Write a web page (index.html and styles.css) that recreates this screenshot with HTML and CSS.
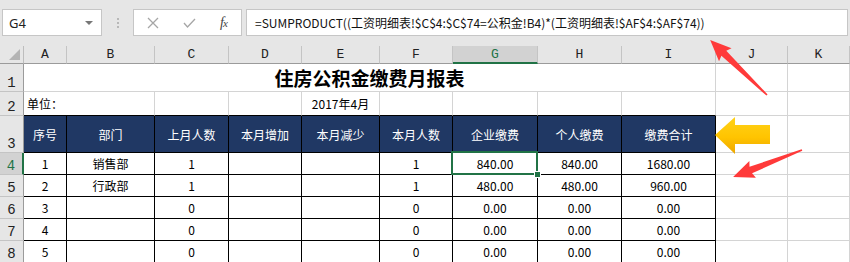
FILE: index.html
```html
<!DOCTYPE html>
<html lang="zh-CN">
<head>
  <meta charset="UTF-8">
  <title>住房公积金缴费月报表</title>
  <link rel="stylesheet" href="styles.css">
</head>
<body>

<!-- formula bar -->
<div class="bar">
  <div class="namebox">
    <span>G4</span>
    <span class="caret"></span>
  </div>
  <div class="grip"><i></i><i></i><i></i></div>
  <div class="fnbox">
    <svg class="cancel" width="12" height="12" viewBox="0 0 12 12"><path d="M1 1 L11 11 M11 1 L1 11" /></svg>
    <svg class="enter" width="13" height="10" viewBox="0 0 13 10"><path d="M1 5 L4.5 9 L12 1" /></svg>
    <span class="fx">f<small>x</small></span>
  </div>
  <div class="formula">=SUMPRODUCT((工资明细表!$C$4:$C$74=公积金!B4)*(工资明细表!$AF$4:$AF$74))</div>
</div>

<!-- sheet -->
<div class="sheet">
  <div class="corner"><span></span></div>
  <div class="colhead">A</div>
  <div class="colhead">B</div>
  <div class="colhead">C</div>
  <div class="colhead">D</div>
  <div class="colhead">E</div>
  <div class="colhead">F</div>
  <div class="colhead active">G</div>
  <div class="colhead">H</div>
  <div class="colhead">I</div>
  <div class="colhead">J</div>
  <div class="colhead">K</div>

  <!-- row 1 -->
  <div class="rowhead">1</div>
  <div class="cell title">住房公积金缴费月报表</div>
  <div class="cell"></div>
  <div class="cell"></div>

  <!-- row 2 -->
  <div class="rowhead">2</div>
  <div class="cell top unit">单位：</div>
  <div class="cell top"></div>
  <div class="cell top"></div>
  <div class="cell top">2017年4月</div>
  <div class="cell top"></div>
  <div class="cell top"></div>
  <div class="cell top"></div>
  <div class="cell top"></div>
  <div class="cell"></div>
  <div class="cell"></div>

  <!-- row 3 -->
  <div class="rowhead">3</div>
  <div class="cell th">序号</div>
  <div class="cell th">部门</div>
  <div class="cell th">上月人数</div>
  <div class="cell th">本月增加</div>
  <div class="cell th">本月减少</div>
  <div class="cell th">本月人数</div>
  <div class="cell th">企业缴费</div>
  <div class="cell th">个人缴费</div>
  <div class="cell th">缴费合计</div>
  <div class="cell"></div>
  <div class="cell"></div>

  <!-- row 4 -->
  <div class="rowhead active">4</div>
  <div class="cell td">1</div>
  <div class="cell td">销售部</div>
  <div class="cell td">1</div>
  <div class="cell td"></div>
  <div class="cell td"></div>
  <div class="cell td">1</div>
  <div class="cell td selected">840.00<span class="handle"></span></div>
  <div class="cell td">840.00</div>
  <div class="cell td">1680.00</div>
  <div class="cell"></div>
  <div class="cell"></div>

  <!-- row 5 -->
  <div class="rowhead">5</div>
  <div class="cell td">2</div>
  <div class="cell td">行政部</div>
  <div class="cell td">1</div>
  <div class="cell td"></div>
  <div class="cell td"></div>
  <div class="cell td">1</div>
  <div class="cell td">480.00</div>
  <div class="cell td">480.00</div>
  <div class="cell td">960.00</div>
  <div class="cell"></div>
  <div class="cell"></div>

  <!-- row 6 -->
  <div class="rowhead">6</div>
  <div class="cell td">3</div>
  <div class="cell td"></div>
  <div class="cell td">0</div>
  <div class="cell td"></div>
  <div class="cell td"></div>
  <div class="cell td">0</div>
  <div class="cell td">0.00</div>
  <div class="cell td">0.00</div>
  <div class="cell td">0.00</div>
  <div class="cell"></div>
  <div class="cell"></div>

  <!-- row 7 -->
  <div class="rowhead">7</div>
  <div class="cell td">4</div>
  <div class="cell td"></div>
  <div class="cell td">0</div>
  <div class="cell td"></div>
  <div class="cell td"></div>
  <div class="cell td">0</div>
  <div class="cell td">0.00</div>
  <div class="cell td">0.00</div>
  <div class="cell td">0.00</div>
  <div class="cell"></div>
  <div class="cell"></div>

  <!-- row 8 -->
  <div class="rowhead">8</div>
  <div class="cell td">5</div>
  <div class="cell td"></div>
  <div class="cell td">0</div>
  <div class="cell td"></div>
  <div class="cell td"></div>
  <div class="cell td">0</div>
  <div class="cell td">0.00</div>
  <div class="cell td">0.00</div>
  <div class="cell td">0.00</div>
  <div class="cell"></div>
  <div class="cell"></div>
</div>

<!-- annotation arrows drawn over the screenshot -->
<svg class="marks" width="850" height="262" viewBox="0 0 850 262">
  <defs>
    <linearGradient id="gold" x1="0" y1="0" x2="0" y2="1">
      <stop offset="0" stop-color="#ffd21a" />
      <stop offset="0.55" stop-color="#ffc400" />
      <stop offset="1" stop-color="#eda600" />
    </linearGradient>
  </defs>
  <polygon fill="url(#gold)" points="715,135 735,117 735,125 770,125 770,144 735,144 735,154" />
  <g transform="translate(767 95) rotate(-136)">
    <polygon class="red" points="0,-0.8 60,-3.5 58,-9 79,0 58,9 60,3.5 0,0.8" />
  </g>
  <g transform="translate(802 150) rotate(158.6)">
    <polygon class="red" points="0,-0.8 55,-3.5 53,-9 74,0 53,9 55,3.5 0,0.8" />
  </g>
</svg>

</body>
</html>
```

FILE: styles.css
```css
html, body {
  margin: 0;
  padding: 0;
  height: 100%;
  overflow: hidden;
}

body {
  position: relative;
  background: #ffffff;
  font-family: "Noto Sans CJK SC", "Noto Sans", sans-serif;
  font-size: 12px;
  color: #000;
}

/* ---------- formula bar ---------- */
.bar {
  height: 46px;
  background: #e6e6e6;
  display: flex;
  align-items: flex-start;
  padding: 9px 2px 0 2px;
  box-sizing: border-box;
}

.namebox {
  width: 100px;
  height: 27px;
  box-sizing: border-box;
  background: #fff;
  border: 1px solid #c6c6c6;
  display: flex;
  align-items: center;
  justify-content: space-between;
  padding: 0 6px 0 6px;
  font-family: "Noto Sans", sans-serif;
  font-size: 13px;
  color: #222;
}

.caret {
  width: 0;
  height: 0;
  border-left: 4px solid transparent;
  border-right: 4px solid transparent;
  border-top: 4px solid #777;
  margin-right: 2px;
}

.grip {
  width: 31px;
  height: 27px;
  display: flex;
  flex-direction: column;
  align-items: center;
  justify-content: center;
  gap: 2px;
}

.grip i {
  width: 2px;
  height: 2px;
  background: #b8b8b8;
}

.fnbox {
  width: 109px;
  height: 27px;
  box-sizing: border-box;
  background: #fff;
  border: 1px solid #c6c6c6;
  display: flex;
  align-items: center;
  padding: 0 0 0 13px;
}

.fnbox svg path {
  fill: none;
  stroke: #a6a6a6;
  stroke-width: 1.3;
}

.fnbox .enter {
  margin-left: 24px;
}

.fx {
  margin-left: 24px;
  font-family: "Liberation Serif", serif;
  font-style: italic;
  font-size: 14px;
  color: #444;
  letter-spacing: -1px;
}

.fx small {
  font-size: 11px;
}

.formula {
  flex: 1;
  margin-left: 4px;
  height: 27px;
  box-sizing: border-box;
  background: #fff;
  border: 1px solid #c6c6c6;
  display: flex;
  align-items: center;
  padding-left: 8px;
  font-size: 12px;
  color: #111;
  white-space: nowrap;
  overflow: hidden;
}

/* ---------- sheet grid ---------- */
.sheet {
  display: grid;
  grid-template-columns: 24px 43px 88px 74px 73px 78px 73px 85px 84px 94px 72px 62px;
  grid-template-rows: 18px 28px 24px 37px 22px 22px 22px 22px 22px;
}

.corner {
  background: #e6e6e6;
  border-right: 1px solid #bdbdbd;
  border-bottom: 1px solid #9b9b9b;
  display: flex;
  align-items: flex-end;
  justify-content: flex-end;
  padding: 0 3px 3px 0;
}

.corner span {
  width: 0;
  height: 0;
  border-left: 11px solid transparent;
  border-bottom: 11px solid #b4b4b4;
}

.colhead {
  background: #e6e6e6;
  border-right: 1px solid #c4c4c4;
  border-bottom: 1px solid #9b9b9b;
  display: flex;
  align-items: center;
  justify-content: center;
  font-family: "Liberation Mono", monospace;
  font-size: 13px;
  color: #222;
}

.colhead.active {
  background: #d2d2d2;
  color: #217346;
  border-bottom: 2px solid #217346;
}

.rowhead {
  background: #e6e6e6;
  border-right: 1px solid #9b9b9b;
  border-bottom: 1px solid #c4c4c4;
  display: flex;
  align-items: flex-end;
  justify-content: center;
  font-family: "Liberation Mono", monospace;
  font-size: 14px;
  color: #222;
  line-height: 1;
  padding-bottom: 1px;
  box-sizing: border-box;
}

.rowhead.active {
  background: #d2d2d2;
  color: #217346;
  border-right: 2px solid #217346;
}

.cell {
  border-right: 1px solid #d4d4d4;
  border-bottom: 1px solid #d4d4d4;
  display: flex;
  align-items: center;
  justify-content: center;
  white-space: nowrap;
  position: relative;
}

.title {
  grid-column: span 9;
  font-size: 19px;
  font-weight: bold;
}

.cell.top {
  border-bottom-color: #000;
}

.unit {
  grid-column: span 2;
  justify-content: flex-start;
  padding-left: 3px;
}

.th {
  background: #203864;
  color: #fff;
  border-right-color: #000;
  border-bottom-color: #000;
}

.td {
  border-right-color: #000;
  border-bottom-color: #000;
}

/* active cell frame, drawn over the gridlines */
.selected::before {
  content: "";
  position: absolute;
  left: -2px;
  top: -2px;
  right: -1px;
  bottom: -1px;
  border: 2px solid #217346;
}

.handle {
  position: absolute;
  right: -4px;
  bottom: -4px;
  width: 5px;
  height: 5px;
  background: #217346;
  border: 1px solid #fff;
  z-index: 2;
}

/* ---------- annotation overlay ---------- */
.marks {
  position: absolute;
  left: 0;
  top: 0;
  pointer-events: none;
}

.marks .red {
  fill: #ff3a3a;
}
```
